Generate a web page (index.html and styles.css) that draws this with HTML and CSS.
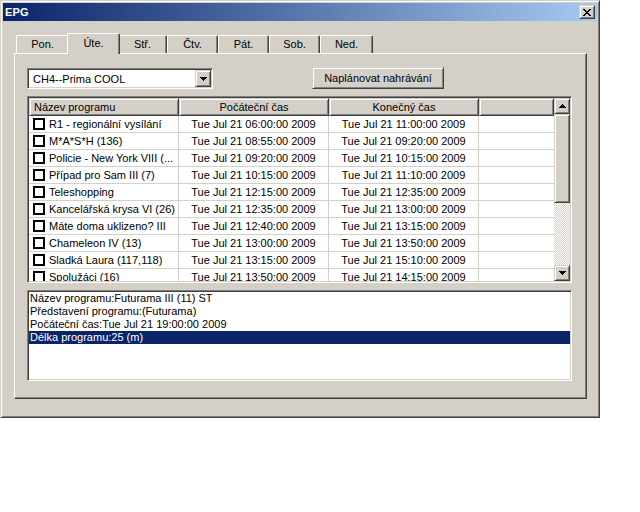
FILE: index.html
```html
<!DOCTYPE html>
<html lang="cs">
<head>
<meta charset="utf-8">
<title>EPG</title>
<link rel="stylesheet" href="styles.css">
</head>
<body>
<div class="window">
  <div class="titlebar">
    <span class="title">EPG</span>
    <div class="close raised">
      <svg width="8" height="7" viewBox="0 0 8 7"><path d="M0 0h2v1h-2zM6 0h2v1h-2zM1 1h2v1h-2zM5 1h2v1h-2zM2 2h4v1h-4zM3 3h2v1h-2zM2 4h4v1h-4zM1 5h2v1h-2zM5 5h2v1h-2zM0 6h2v1h-2zM6 6h2v1h-2z" fill="#000"/></svg>
    </div>
  </div>
  <div class="tabs">
    <div class="tab w53">Pon.</div>
    <div class="tab w49 selected">Úte.</div>
    <div class="tab w49">Stř.</div>
    <div class="tab w51">Čtv.</div>
    <div class="tab w51">Pát.</div>
    <div class="tab w51">Sob.</div>
    <div class="tab w53">Ned.</div>
  </div>
  <div class="panel">
    <div class="toprow">
      <div class="combo sunken">
        <span class="combo-text">CH4--Prima COOL</span>
        <div class="combo-btn raised">
          <svg width="7" height="4" viewBox="0 0 7 4"><path d="M0 0h7v1h-7zM1 1h5v1h-5zM2 2h3v1h-3zM3 3h1v1h-1z" fill="#000"/></svg>
        </div>
      </div>
      <div class="button raised">Naplánovat nahrávání</div>
    </div>
    <div class="listview sunken">
      <div class="lv-main">
        <div class="lv-header">
          <div class="hcell c1 raised">Název programu</div>
          <div class="hcell c2 raised center">Počáteční čas</div>
          <div class="hcell c3 raised center">Konečný čas</div>
          <div class="hcell c4 raised"></div>
        </div>
        <div class="lv-rows">
          <div class="row"><div class="cell c1"><span class="chk"></span>R1 - regionální vysílání</div><div class="cell c2">Tue Jul 21 06:00:00 2009</div><div class="cell c3">Tue Jul 21 11:00:00 2009</div><div class="cell c4"></div></div>
          <div class="row"><div class="cell c1"><span class="chk"></span>M*A*S*H (136)</div><div class="cell c2">Tue Jul 21 08:55:00 2009</div><div class="cell c3">Tue Jul 21 09:20:00 2009</div><div class="cell c4"></div></div>
          <div class="row"><div class="cell c1"><span class="chk"></span>Policie - New York VIII (...</div><div class="cell c2">Tue Jul 21 09:20:00 2009</div><div class="cell c3">Tue Jul 21 10:15:00 2009</div><div class="cell c4"></div></div>
          <div class="row"><div class="cell c1"><span class="chk"></span>Případ pro Sam III (7)</div><div class="cell c2">Tue Jul 21 10:15:00 2009</div><div class="cell c3">Tue Jul 21 11:10:00 2009</div><div class="cell c4"></div></div>
          <div class="row"><div class="cell c1"><span class="chk"></span>Teleshopping</div><div class="cell c2">Tue Jul 21 12:15:00 2009</div><div class="cell c3">Tue Jul 21 12:35:00 2009</div><div class="cell c4"></div></div>
          <div class="row"><div class="cell c1"><span class="chk"></span>Kancelářská krysa VI (26)</div><div class="cell c2">Tue Jul 21 12:35:00 2009</div><div class="cell c3">Tue Jul 21 13:00:00 2009</div><div class="cell c4"></div></div>
          <div class="row"><div class="cell c1"><span class="chk"></span>Máte doma uklizeno? III</div><div class="cell c2">Tue Jul 21 12:40:00 2009</div><div class="cell c3">Tue Jul 21 13:15:00 2009</div><div class="cell c4"></div></div>
          <div class="row"><div class="cell c1"><span class="chk"></span>Chameleon IV (13)</div><div class="cell c2">Tue Jul 21 13:00:00 2009</div><div class="cell c3">Tue Jul 21 13:50:00 2009</div><div class="cell c4"></div></div>
          <div class="row"><div class="cell c1"><span class="chk"></span>Sladká Laura (117,118)</div><div class="cell c2">Tue Jul 21 13:15:00 2009</div><div class="cell c3">Tue Jul 21 15:10:00 2009</div><div class="cell c4"></div></div>
          <div class="row"><div class="cell c1"><span class="chk"></span>Spolužáci (16)</div><div class="cell c2">Tue Jul 21 13:50:00 2009</div><div class="cell c3">Tue Jul 21 14:15:00 2009</div><div class="cell c4"></div></div>
        </div>
      </div>
      <div class="scrollbar">
        <div class="sb-btn raised"><svg width="7" height="4" viewBox="0 0 7 4"><path d="M3 0h1v1h-1zM2 1h3v1h-3zM1 2h5v1h-5zM0 3h7v1h-7z" fill="#000"/></svg></div>
        <div class="sb-thumb raised"></div>
        <div class="sb-track"></div>
        <div class="sb-btn raised"><svg width="7" height="4" viewBox="0 0 7 4"><path d="M0 0h7v1h-7zM1 1h5v1h-5zM2 2h3v1h-3zM3 3h1v1h-1z" fill="#000"/></svg></div>
      </div>
    </div>
    <div class="infobox sunken">
      <div class="line">Název programu:Futurama III (11) ST</div>
      <div class="line">Představení programu:(Futurama)</div>
      <div class="line">Počáteční čas:Tue Jul 21 19:00:00 2009</div>
      <div class="line sel">Délka programu:25 (m)</div>
    </div>
  </div>
</div>
</body>
</html>
```

FILE: styles.css
```css
* { box-sizing: border-box; }
html, body { margin: 0; padding: 0; background: #fff; }
body {
  font-family: "Liberation Sans", Arial, sans-serif;
  font-size: 11px;
  color: #000;
}
.raised {
  background: #d4d0c8;
  border: 1px solid;
  border-color: #d4d0c8 #404040 #404040 #d4d0c8;
  box-shadow: inset 1px 1px #fff, inset -1px -1px #808080;
}
.sunken {
  background: #fff;
  border: 1px solid;
  border-color: #808080 #fff #fff #808080;
  box-shadow: inset 1px 1px #404040, inset -1px -1px #d4d0c8;
  padding: 1px;
}
.window {
  width: 600px;
  height: 418px;
  background: #d4d0c8;
  border: 1px solid;
  border-color: #d4d0c8 #404040 #404040 #d4d0c8;
  box-shadow: inset 1px 1px #fff, inset -1px -1px #808080;
  padding: 2px;
}
.titlebar {
  height: 18px;
  background: linear-gradient(to right, #0a246a, #a6caf0);
  display: flex;
  align-items: center;
  justify-content: space-between;
  padding: 0 2px 0 2px;
}
.title {
  color: #fff;
  font-weight: bold;
  font-size: 11px;
  letter-spacing: 0.2px;
}
.close {
  width: 16px;
  height: 14px;
  display: flex;
  align-items: center;
  justify-content: center;
  padding-left: 0;
}
.close svg { display: block; margin-left: -1px; }
.tabs {
  height: 20px;
  margin-top: 12px;
  padding-left: 13px;
  display: flex;
  align-items: flex-end;
}
.tab {
  flex: none;
  height: 18px;
  background: #d4d0c8;
  border-top: 1px solid #fff;
  border-left: 1px solid #fff;
  border-right: 1px solid #404040;
  box-shadow: inset -1px 0 #808080;
  border-radius: 2px 2px 0 0;
  display: flex;
  align-items: center;
  justify-content: center;
  padding-bottom: 1px;
}
.w49 { width: 49px; }
.w51 { width: 51px; }
.w53 { width: 53px; }
.tab.selected {
  width: 53px;
  height: 21px;
  margin: 0 -2px -1px -2px;
  position: relative;
  z-index: 1;
  padding-bottom: 3px;
}
.panel {
  margin-left: 11px;
  width: 573px;
  height: 346px;
  border-top: 1px solid #fff;
  border-left: 1px solid #fff;
  border-right: 1px solid #404040;
  border-bottom: 1px solid #404040;
  box-shadow: inset -1px -1px #808080;
  padding: 13px 0 0 12px;
}
.toprow {
  display: flex;
  align-items: flex-start;
}
.combo {
  margin-top: 1px;
  width: 186px;
  height: 21px;
  display: flex;
  align-items: center;
  justify-content: space-between;
}
.combo-text { padding-left: 4px; }
.combo-btn {
  width: 16px;
  height: 17px;
  display: flex;
  align-items: center;
  justify-content: center;
}
.combo-btn svg, .sb-btn svg { display: block; }
.button {
  margin-left: 99px;
  width: 132px;
  height: 22px;
  display: flex;
  align-items: center;
  justify-content: center;
  padding-bottom: 1px;
}
.listview {
  margin-top: 7px;
  width: 545px;
  height: 187px;
  display: flex;
}
.lv-main {
  width: 525px;
  overflow: hidden;
}
.lv-header {
  display: flex;
  height: 18px;
}
.hcell {
  height: 18px;
  display: flex;
  align-items: center;
  padding-left: 4px;
  padding-bottom: 1px;
  white-space: nowrap;
}
.hcell.center { justify-content: center; padding-left: 0; }
.c1 { width: 150px; flex: none; }
.c2 { width: 150px; flex: none; }
.c3 { width: 150px; flex: none; }
.c4 { width: 75px; flex: none; }
.row {
  display: flex;
  height: 17px;
  border-bottom: 1px solid #d4d0c8;
}
.cell {
  height: 16px;
  border-right: 1px solid #d4d0c8;
  display: flex;
  align-items: center;
  white-space: nowrap;
  overflow: hidden;
}
.cell.c2, .cell.c3 { justify-content: center; }
.cell.c4 { border-right: none; }
.cell.c1 { padding-left: 4px; }
.chk {
  flex: none;
  width: 12px;
  height: 12px;
  border: 2px solid #000;
  background: #fff;
  margin-right: 4px;
}
.scrollbar {
  width: 16px;
  display: flex;
  flex-direction: column;
}
.sb-btn {
  height: 16px;
  display: flex;
  align-items: center;
  justify-content: center;
}
.sb-thumb { height: 89px; }
.sb-track {
  height: 62px;
  background: repeating-conic-gradient(#fff 0 25%, #d4d0c8 0 50%) 0 0 / 2px 2px;
}
.infobox {
  margin-top: 7px;
  width: 545px;
  height: 91px;
}
.line {
  height: 13px;
  line-height: 13px;
  padding-left: 1px;
  white-space: nowrap;
}
.line.sel {
  background: #0a246a;
  color: #fff;
}
```
